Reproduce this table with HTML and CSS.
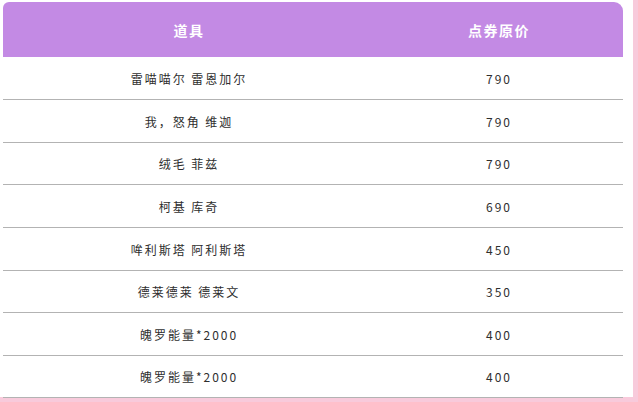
FILE: index.html
```html
<!DOCTYPE html>
<html lang="zh-CN">
<head>
<meta charset="utf-8">
<title>道具价格</title>
<link rel="stylesheet" href="styles.css">
</head>
<body>
<div class="page">
  <table class="price-table">
    <thead>
      <tr><th class="col-item">道具</th><th class="col-price">点券原价</th></tr>
    </thead>
    <tbody>
      <tr class="tall"><td>雷喵喵尔 雷恩加尔</td><td>790</td></tr>
      <tr class="tall"><td>我，怒角 维迦</td><td>790</td></tr>
      <tr class="short"><td>绒毛 菲兹</td><td>790</td></tr>
      <tr class="tall"><td>柯基 库奇</td><td>690</td></tr>
      <tr class="tall"><td>哞利斯塔 阿利斯塔</td><td>450</td></tr>
      <tr class="short"><td>德莱德莱 德莱文</td><td>350</td></tr>
      <tr class="tall"><td>魄罗能量*2000</td><td>400</td></tr>
      <tr class="short"><td>魄罗能量*2000</td><td>400</td></tr>
    </tbody>
  </table>
</div>
</body>
</html>
```
FILE: styles.css
```css
html, body {
  margin: 0;
  padding: 0;
}
body {
  background: #f8cadb;
  width: 638px;
  height: 402px;
  overflow: hidden;
  font-family: "Noto Sans CJK SC", "Noto Sans", sans-serif;
}
.page {
  background: #ffffff;
  width: 633px;
  height: 397px;
  box-sizing: border-box;
  padding: 2px 0 0 3px;
}
.price-table {
  width: 620px;
  border-collapse: separate;
  border-spacing: 0;
  table-layout: fixed;
}
.price-table th {
  background: #c38ae4;
  color: #ffffff;
  font-size: 14px;
  font-weight: bold;
  letter-spacing: 1.5px;
  height: 55px;
  padding: 0;
  text-align: center;
}
.col-item {
  width: 60%;
  border-top-left-radius: 6px;
}
.col-price {
  width: 40%;
  border-top-right-radius: 9px;
}
.price-table td {
  padding: 0;
  text-align: center;
  font-size: 12px;
  color: #2e2e2e;
  letter-spacing: 2px;
  border-bottom: 1px solid #b3b3b3;
}
.tall td {
  height: 42px;
}
.short td {
  height: 41px;
}
```
